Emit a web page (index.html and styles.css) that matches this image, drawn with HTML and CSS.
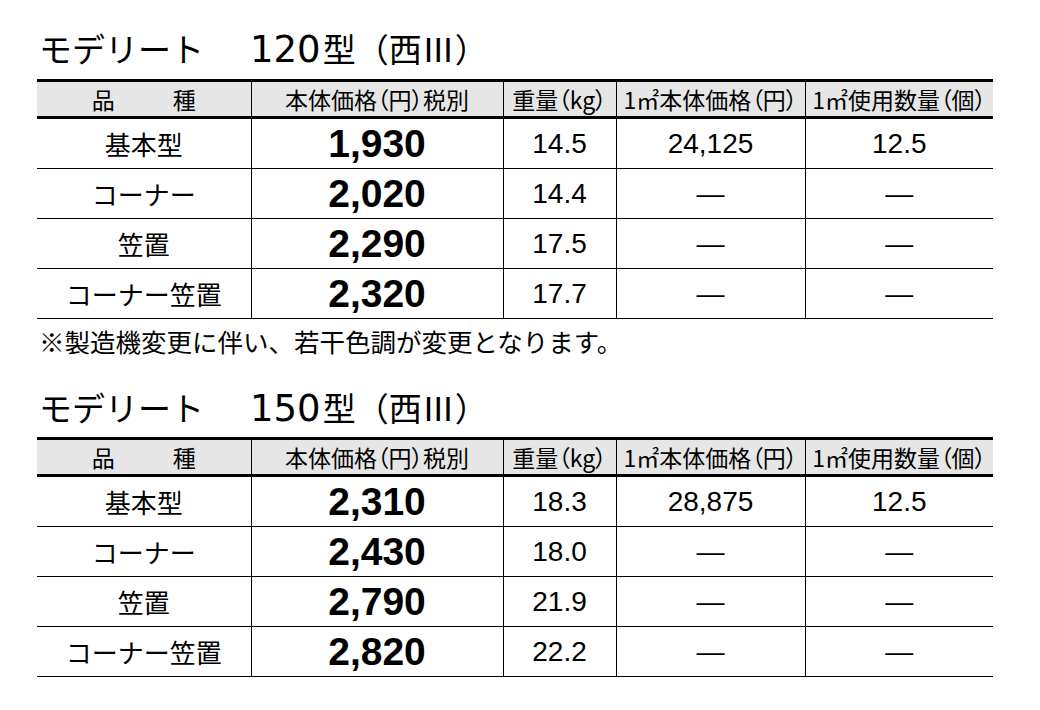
FILE: index.html
```html
<!DOCTYPE html>
<html lang="ja">
<head>
<meta charset="utf-8">
<link rel="stylesheet" href="styles.css">
</head>
<body>
<div class="page">
  <section class="block">
    <h2 class="title"><span class="name">モデリート</span><span class="model">120</span>型（西Ⅲ）</h2>
    <table class="spec">
      <colgroup><col class="c1"><col class="c2"><col class="c3"><col class="c4"><col class="c5"></colgroup>
      <thead>
        <tr><th class="kind">品　　種</th><th>本体価格（円）税別</th><th>重量（kg）</th><th>1㎡本体価格（円）</th><th>1㎡使用数量（個）</th></tr>
      </thead>
      <tbody>
        <tr><td class="jp">基本型</td><td class="price">1,930</td><td class="num">14.5</td><td class="num">24,125</td><td class="num">12.5</td></tr>
        <tr><td class="jp">コーナー</td><td class="price">2,020</td><td class="num">14.4</td><td class="num">—</td><td class="num">—</td></tr>
        <tr><td class="jp">笠置</td><td class="price">2,290</td><td class="num">17.5</td><td class="num">—</td><td class="num">—</td></tr>
        <tr><td class="jp">コーナー笠置</td><td class="price">2,320</td><td class="num">17.7</td><td class="num">—</td><td class="num">—</td></tr>
      </tbody>
    </table>
    <p class="note">※製造機変更に伴い、若干色調が変更となります。</p>
  </section>
  <section class="block">
    <h2 class="title"><span class="name">モデリート</span><span class="model">150</span>型（西Ⅲ）</h2>
    <table class="spec">
      <colgroup><col class="c1"><col class="c2"><col class="c3"><col class="c4"><col class="c5"></colgroup>
      <thead>
        <tr><th class="kind">品　　種</th><th>本体価格（円）税別</th><th>重量（kg）</th><th>1㎡本体価格（円）</th><th>1㎡使用数量（個）</th></tr>
      </thead>
      <tbody>
        <tr><td class="jp">基本型</td><td class="price">2,310</td><td class="num">18.3</td><td class="num">28,875</td><td class="num">12.5</td></tr>
        <tr><td class="jp">コーナー</td><td class="price">2,430</td><td class="num">18.0</td><td class="num">—</td><td class="num">—</td></tr>
        <tr><td class="jp">笠置</td><td class="price">2,790</td><td class="num">21.9</td><td class="num">—</td><td class="num">—</td></tr>
        <tr><td class="jp">コーナー笠置</td><td class="price">2,820</td><td class="num">22.2</td><td class="num">—</td><td class="num">—</td></tr>
      </tbody>
    </table>
  </section>
</div>
</body>
</html>
```

FILE: styles.css
```css
html, body {
  margin: 0;
  padding: 0;
  background: #ffffff;
  color: #000000;
  font-family: "Noto Sans CJK JP", "Noto Sans", sans-serif;
}

.page {
  width: 956px;
  padding: 25px 0 0 37px;
}

.title {
  margin: 0 0 8px 0;
  height: 46px;
  line-height: 46px;
  font-size: 33px;
  font-weight: 400;
  padding-left: 2px;
  white-space: nowrap;
}

.title .model {
  margin-left: 46px;
  margin-right: 2px;
  font-family: "DejaVu Sans", sans-serif;
  font-size: 37px;
  letter-spacing: 0;
}

.block + .block .title {
  margin-top: 28px;
  margin-bottom: 7px;
}

.spec {
  width: 956px;
  border-collapse: collapse;
  table-layout: fixed;
}

.spec .c1 { width: 214px; }
.spec .c2 { width: 252px; }
.spec .c3 { width: 113px; }
.spec .c4 { width: 189px; }
.spec .c5 { width: 188px; }

.spec thead tr {
  background: #e6e6e6;
}

.spec th {
  height: 34px;
  padding: 0;
  border-top: 3px solid #000;
  border-bottom: 3px solid #000;
  font-size: 23px;
  font-weight: 400;
  line-height: 34px;
  text-align: center;
  white-space: nowrap;
  font-feature-settings: "palt";
}

.spec th.kind {
  letter-spacing: 4px;
  padding-left: 4px;
}

.spec th + th,
.spec td + td {
  border-left: 1px solid #000;
}

.spec td {
  height: 49px;
  padding: 0;
  border-bottom: 1px solid #000;
  text-align: center;
  white-space: nowrap;
}

.spec td.jp {
  font-size: 26px;
}

.spec td.price {
  font-family: "Liberation Sans", Arial, sans-serif;
  font-weight: 700;
  font-size: 39px;
}

.spec td.num {
  font-family: "Liberation Sans", Arial, sans-serif;
  font-size: 28px;
}

.note {
  margin: 7px 0 0 0;
  padding-left: 2px;
  height: 30px;
  line-height: 30px;
  font-size: 25.5px;
  white-space: nowrap;
}
```
